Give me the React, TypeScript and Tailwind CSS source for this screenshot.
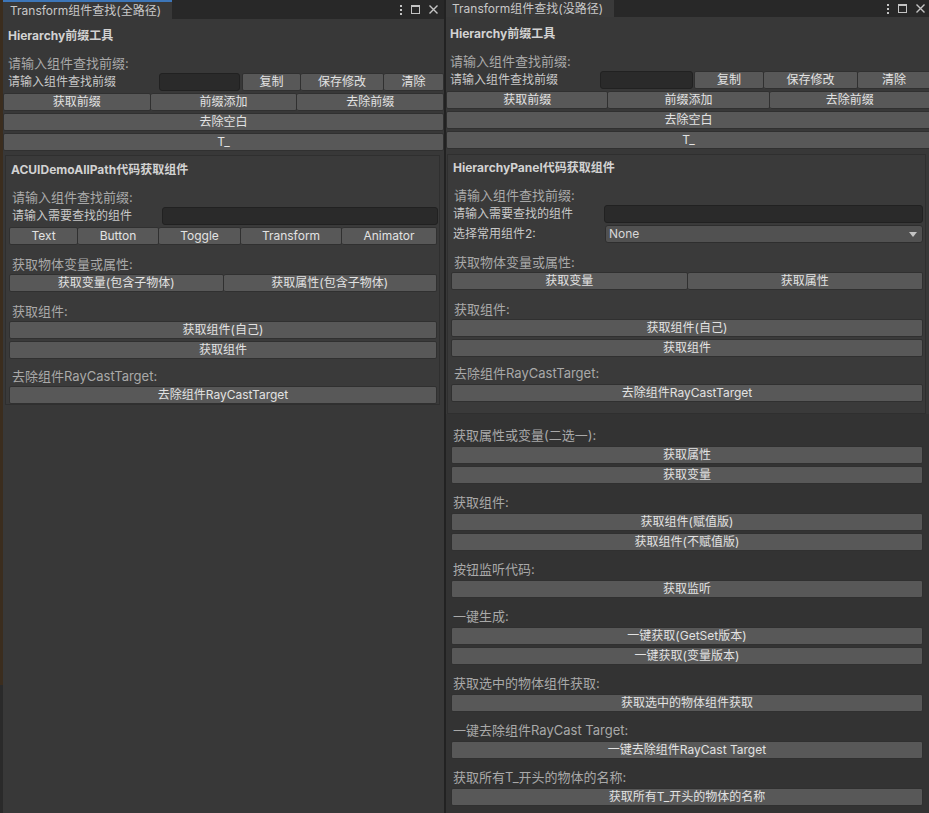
import React from "react";

function Btn({ children, className = "" }: { children: React.ReactNode; className?: string }) {
  return (
    <div
      className={`h-[18px] flex items-center justify-center rounded-[2px] border border-[#303030] bg-[#585858] text-[12px] leading-none text-[#e2e2e2] whitespace-nowrap overflow-hidden ${className}`}
    >
      {children}
    </div>
  );
}

function Header({ children, className = "" }: { children: React.ReactNode; className?: string }) {
  return (
    <div className={`h-[16px] flex items-center text-[13px] leading-none text-[#a9a9a9] whitespace-nowrap ${className}`}>
      {children}
    </div>
  );
}

function Title({ children, className = "" }: { children: React.ReactNode; className?: string }) {
  return (
    <div className={`h-[18px] flex items-center text-[12px] leading-none font-bold text-[#d2d2d2] whitespace-nowrap ${className}`}>
      {children}
    </div>
  );
}

function Field({ className = "" }: { className?: string }) {
  return <div className={`h-[18px] rounded-[3px] border border-[#212121] bg-[#2a2a2a] ${className}`} />;
}

function WindowIcons() {
  return (
    <div className="flex items-center gap-[9px] pr-[6px] text-[#c4c4c4]">
      <div className="flex flex-col gap-[2px]">
        <span className="block w-[2px] h-[2px] bg-[#c4c4c4]" />
        <span className="block w-[2px] h-[2px] bg-[#c4c4c4]" />
        <span className="block w-[2px] h-[2px] bg-[#c4c4c4]" />
      </div>
      <div className="w-[9px] h-[9px] border border-[#c4c4c4] border-t-2" />
      <svg width="9" height="9" viewBox="0 0 9 9">
        <path d="M0.5 0.5 L8.5 8.5 M8.5 0.5 L0.5 8.5" stroke="#c4c4c4" strokeWidth="1.4" />
      </svg>
    </div>
  );
}

function TopTools({ left }: { left: boolean }) {
  return (
    <>
      <Title className={left ? "mt-[8px] pl-[5px]" : "mt-[8px] pl-[4px]"}>Hierarchy前缀工具</Title>
      <Header className={left ? "mt-[10px] pl-[5px]" : "mt-[10px] pl-[4px]"}>请输入组件查找前缀:</Header>
      <div className="mt-[2px] flex h-[18px] items-center">
        <div
          className={`${left ? "w-[156px] pl-[5px]" : "w-[154px] pl-[4px]"} shrink-0 text-[12px] leading-none text-[#c8c8c8] whitespace-nowrap`}
        >
          请输入组件查找前缀
        </div>
        <Field className={left ? "w-[81px] shrink-0" : "w-[93px] shrink-0"} />
        <Btn className={left ? "ml-[2px] w-[59px] shrink-0" : "ml-[1px] w-[70px] shrink-0"}>复制</Btn>
        <Btn className={left ? "border-l-0 w-[83px] shrink-0" : "border-l-0 w-[94px] shrink-0"}>保存修改</Btn>
        <Btn className="border-l-0 flex-1">清除</Btn>
      </div>
      <div className="mt-[2px] flex">
        <Btn className="flex-1">获取前缀</Btn>
        <Btn className="flex-1 border-l-0">前缀添加</Btn>
        <Btn className="flex-1 border-l-0">去除前缀</Btn>
      </div>
      <Btn className="mt-[2px]">去除空白</Btn>
      <Btn className="mt-[2px]">T_</Btn>
    </>
  );
}

function LeftWindow() {
  return (
    <div className="w-[441px] shrink-0 flex flex-col bg-[#383838]">
      <div className="h-[19px] shrink-0 bg-[#282828] flex items-stretch">
        <div className="w-[169px] bg-[#383838] border-t-2 border-[#3d76b8] pl-[7px] flex items-center text-[12px] leading-none text-[#c8c8c8] whitespace-nowrap">
          Transform组件查找(全路径)
        </div>
        <div className="flex-1" />
        <WindowIcons />
      </div>
      <TopTools left />
      <div className="mt-[4px] ml-[2px] w-[435px] border border-[#2f2f2f] bg-[#3a3a3a] pt-[5px] pl-[3px] pr-[2px] flex flex-col">
        <Title className="pl-[2px]">ACUIDemoAllPath代码获取组件</Title>
        <Header className="mt-[10px] pl-[3px]">请输入组件查找前缀:</Header>
        <div className="mt-[2px] flex h-[18px] items-center">
          <div className="w-[153px] shrink-0 pl-[3px] text-[12px] leading-none text-[#c8c8c8] whitespace-nowrap">
            请输入需要查找的组件
          </div>
          <Field className="flex-1 -mr-[1px]" />
        </div>
        <div className="mt-[2px] flex">
          <Btn className="w-[69px] shrink-0">Text</Btn>
          <Btn className="w-[81px] shrink-0 border-l-0">Button</Btn>
          <Btn className="w-[82px] shrink-0 border-l-0">Toggle</Btn>
          <Btn className="w-[101px] shrink-0 border-l-0">Transform</Btn>
          <Btn className="flex-1 border-l-0">Animator</Btn>
        </div>
        <Header className="mt-[11px] pl-[3px]">获取物体变量或属性:</Header>
        <div className="mt-[2px] flex">
          <Btn className="flex-1">获取变量(包含子物体)</Btn>
          <Btn className="flex-1 border-l-0">获取属性(包含子物体)</Btn>
        </div>
        <Header className="mt-[11px] pl-[3px]">获取组件:</Header>
        <Btn className="mt-[2px]">获取组件(自己)</Btn>
        <Btn className="mt-[2px]">获取组件</Btn>
        <Header className="mt-[9px] pl-[3px]">去除组件RayCastTarget:</Header>
        <Btn className="mt-[2px]">去除组件RayCastTarget</Btn>
      </div>
    </div>
  );
}

const lower: { title: string; buttons: string[] }[] = [
  { title: "获取属性或变量(二选一):", buttons: ["获取属性", "获取变量"] },
  { title: "获取组件:", buttons: ["获取组件(赋值版)", "获取组件(不赋值版)"] },
  { title: "按钮监听代码:", buttons: ["获取监听"] },
  { title: "一键生成:", buttons: ["一键获取(GetSet版本)", "一键获取(变量版本)"] },
  { title: "获取选中的物体组件获取:", buttons: ["获取选中的物体组件获取"] },
  { title: "一键去除组件RayCast Target:", buttons: ["一键去除组件RayCast Target"] },
  { title: "获取所有T_开头的物体的名称:", buttons: ["获取所有T_开头的物体的名称"] },
];

function RightWindow() {
  return (
    <div className="w-[485px] shrink-0 flex flex-col bg-[#383838]">
      <div className="h-[17px] shrink-0 bg-[#282828] flex items-stretch">
        <div className="w-[168px] bg-[#3a3a3a] pl-[6px] flex items-center text-[12px] leading-none text-[#c8c8c8] whitespace-nowrap">
          Transform组件查找(没路径)
        </div>
        <div className="flex-1" />
        <WindowIcons />
      </div>
      <TopTools left={false} />
      <div className="mt-[5px] ml-[1px] w-[479px] border border-[#2f2f2f] bg-[#3a3a3a] pt-[4px] pb-[11px] pl-[3px] pr-[2px] flex flex-col">
        <Title className="pl-[2px]">HierarchyPanel代码获取组件</Title>
        <Header className="mt-[10px] pl-[3px]">请输入组件查找前缀:</Header>
        <div className="mt-[2px] flex h-[18px] items-center">
          <div className="w-[153px] shrink-0 pl-[2px] text-[12px] leading-none text-[#c8c8c8] whitespace-nowrap">
            请输入需要查找的组件
          </div>
          <Field className="flex-1" />
        </div>
        <div className="mt-[2px] flex h-[18px] items-center">
          <div className="w-[154px] shrink-0 pl-[2px] text-[12px] leading-none text-[#c8c8c8] whitespace-nowrap">
            选择常用组件2:
          </div>
          <div className="flex-1 h-[18px] rounded-[3px] border border-[#2e2e2e] bg-[#515151] flex items-center pl-[3px] pr-[5px] text-[12px] leading-none text-[#d8d8d8]">
            <span className="flex-1">None</span>
            <svg width="8" height="5" viewBox="0 0 8 5">
              <path d="M0 0 L8 0 L4 5 Z" fill="#c4c4c4" />
            </svg>
          </div>
        </div>
        <Header className="mt-[11px] pl-[3px]">获取物体变量或属性:</Header>
        <div className="mt-[2px] flex">
          <Btn className="flex-1">获取变量</Btn>
          <Btn className="flex-1 border-l-0">获取属性</Btn>
        </div>
        <Header className="mt-[11px] pl-[3px]">获取组件:</Header>
        <Btn className="mt-[2px]">获取组件(自己)</Btn>
        <Btn className="mt-[2px]">获取组件</Btn>
        <Header className="mt-[8px] pl-[3px]">去除组件RayCastTarget:</Header>
        <Btn className="mt-[3px]">去除组件RayCastTarget</Btn>
      </div>
      <div className="flex-1 bg-[#333333] pl-[5px] pr-[8px] flex flex-col">
        {lower.map((s, i) => (
          <div key={s.title} className={i === 0 ? "mt-[13px] flex flex-col" : "mt-[10px] flex flex-col"}>
            <Header className="pl-[2px]">{s.title}</Header>
            {s.buttons.map((b, j) => (
              <Btn key={b} className={j === 0 ? "mt-[3px]" : "mt-[2px]"}>
                {b}
              </Btn>
            ))}
          </div>
        ))}
      </div>
    </div>
  );
}

export default function App() {
  return (
    <div className="w-[929px] h-[813px] overflow-hidden flex bg-[#383838] font-[Inter,'Noto_Sans_CJK_SC',sans-serif]">
      <div className="w-[3px] shrink-0 flex flex-col">
        <div className="h-[685px] bg-[#3b2d1e]" />
        <div className="flex-1 bg-[#2a2a2a]" />
      </div>
      <LeftWindow />
      <div className="w-[2px] shrink-0 bg-[#222222]" />
      <RightWindow />
    </div>
  );
}
